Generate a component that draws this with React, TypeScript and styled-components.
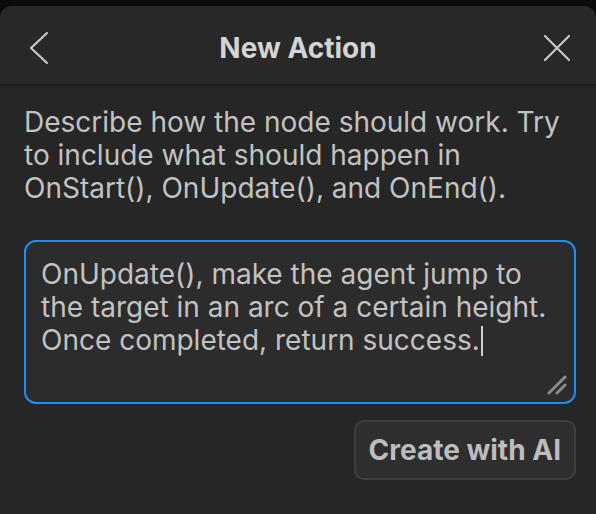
import styled, { createGlobalStyle } from 'styled-components'

const GlobalStyle = createGlobalStyle`
  html, body {
    margin: 0;
    padding: 0;
    background: #0b0b0b;
  }
  body {
    font-family: Inter, "Noto Sans", sans-serif;
  }
`

const ChevronLeft = () => (
  <svg width="22" height="34" viewBox="0 0 22 34" fill="none">
    <polyline points="19,2 3,17 19,32" stroke="#c9c9c9" strokeWidth="2.2" strokeLinecap="round" strokeLinejoin="round" />
  </svg>
)

const CloseIcon = () => (
  <svg width="28" height="28" viewBox="0 0 28 28" fill="none">
    <path d="M2 2 L26 26 M26 2 L2 26" stroke="#c9c9c9" strokeWidth="2.2" strokeLinecap="round" />
  </svg>
)

const ResizeGrip = () => (
  <svg width="22" height="22" viewBox="0 0 22 22" fill="none">
    <path d="M3 19 L19 3 M11 19 L19 11" stroke="#8a8a8a" strokeWidth="3" strokeLinecap="round" />
  </svg>
)

export default function App() {
  return (
    <>
      <GlobalStyle />
      <Panel>
        <Header>
          <IconButton aria-label="Back">
            <ChevronLeft />
          </IconButton>
          <Title>New Action</Title>
          <IconButton aria-label="Close">
            <CloseIcon />
          </IconButton>
        </Header>
        <Body>
          <Description>
            Describe how the node should work. Try to include what should happen in OnStart(), OnUpdate(), and
            OnEnd().
          </Description>
          <PromptField>
            OnUpdate(), make the agent jump to the target in an arc of a certain height. Once completed, return
            success.
            <Caret />
            <Grip>
              <ResizeGrip />
            </Grip>
          </PromptField>
          <Actions>
            <CreateButton>Create with AI</CreateButton>
          </Actions>
        </Body>
      </Panel>
    </>
  )
}

const Panel = styled.div`
  margin-top: 6px;
  height: 508px;
  background: #262626;
  border-radius: 12px 12px 0 0;
  overflow: hidden;
  display: flex;
  flex-direction: column;
`

const Header = styled.div`
  height: 80px;
  flex-shrink: 0;
  background: #282828;
  border-bottom: 2px solid #1d1d1d;
  display: flex;
  align-items: center;
  justify-content: space-between;
  padding: 5px 24px 0 24px;
  box-sizing: border-box;
`

const IconButton = styled.button`
  background: none;
  border: none;
  padding: 0;
  display: flex;
  align-items: center;
  justify-content: center;
  width: 30px;
  height: 40px;
  cursor: pointer;
`

const Title = styled.h1`
  margin: 0;
  font-size: 28px;
  font-weight: 700;
  color: #d4d4d4;
`

const Body = styled.div`
  padding: 20px 20px 0 24px;
  display: flex;
  flex-direction: column;
`

const Description = styled.p`
  margin: 0;
  font-size: 28px;
  line-height: 33px;
  color: #c2c2c2;
`

const PromptField = styled.div`
  position: relative;
  margin-top: 35px;
  height: 127px;
  padding: 16px 14px 17px 15px;
  border: 2px solid #1f8ff5;
  border-radius: 12px;
  background: #2c2c2c;
  font-size: 28px;
  line-height: 33px;
  color: #c2c2c2;
`

const Caret = styled.span`
  display: inline-block;
  width: 2px;
  height: 30px;
  margin-left: 1px;
  background: #d0d0d0;
  vertical-align: -6px;
`

const Grip = styled.span`
  position: absolute;
  right: 6px;
  bottom: 6px;
  display: flex;
`

const Actions = styled.div`
  display: flex;
  justify-content: flex-end;
  margin-top: 16px;
`

const CreateButton = styled.button`
  height: 60px;
  padding: 0 13px;
  border: 2px solid #3f3f3f;
  border-radius: 10px;
  background: #2e2e2e;
  color: #bdbdbd;
  font-family: Inter, "Noto Sans", sans-serif;
  font-size: 28px;
  font-weight: 700;
  cursor: pointer;
`
